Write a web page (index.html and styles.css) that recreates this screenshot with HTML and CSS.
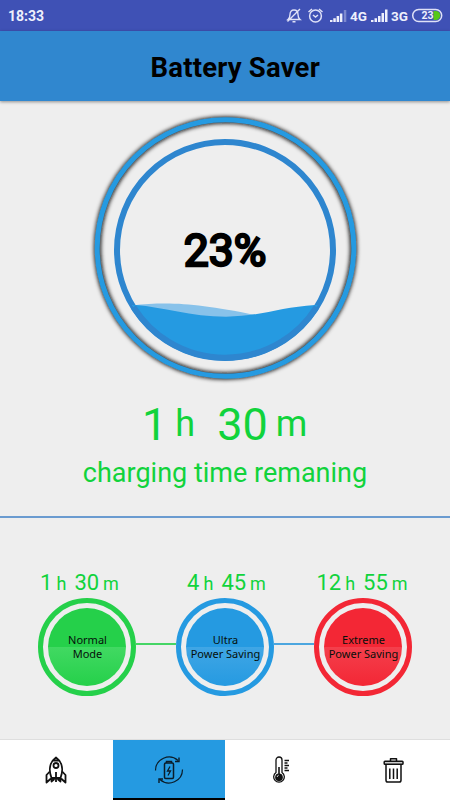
FILE: index.html
```html
<!DOCTYPE html>
<html lang="en">
<head>
<meta charset="utf-8" />
<title>Battery Saver</title>
<link rel="stylesheet" href="styles.css">
</head>
<body>
	<div class="status-bar">
		<span class="clock">18:33</span>
		<svg class="status-icons" width="160" height="31" viewBox="0 0 160 31" aria-hidden="true">
			<!-- muted bell -->
			<g fill="none" stroke="#dfe1f7" stroke-width="1.4">
				<path d="M3 19.500c1.500-1.200 2-2.500 2-5 0-3 1.500-4.500 4-4.500s4 1.500 4 4.500c0 2.500.5 3.800 2 5zM7.500 21.800h3M2.500 21.500L15 9"/>
			</g>
			<!-- alarm -->
			<g fill="none" stroke="#dfe1f7" stroke-width="1.500">
				<circle cx="30.500" cy="16" r="5.900"/>
				<path d="M23.500 12l3.500-3M37.500 12l-3.500-3M28 15l2.500 2 2.500-2"/>
			</g>
			<!-- signal 4G -->
			<g fill="#eef0fc">
				<path d="M45 20h2.500v2H45zM48.300 18.300h2.500V22h-2.500zM51.600 16h2.500v6h-2.500zM54.900 13.500h2.500V22h-2.500z"/>
				<path d="M58.800 10h2.500v12h-2.500z" opacity=".35"/>
			</g>
			<!-- signal 3G -->
			<path fill="#eef0fc" d="M86 20h2.500v2H86zM89.500 18.300H92V22h-2.500zM93 16h2.500v6H93zM96.500 13H99v9h-2.500zM100 9.500h2.500V22H100z"/>
			<text class="net" x="65" y="21">4G</text>
			<text class="net" x="106" y="21">3G</text>
			<!-- battery -->
			<rect x="127.700" y="9.500" width="29" height="12" rx="6" fill="none" stroke="#dfe1f7" stroke-width="1.500"/>
			<path d="M148.500 11h2.200a4.500 4.500 0 0 1 0 9h-2.200z" fill="#55c818"/>
			<text class="level" x="136.500" y="19.300">23</text>
		</svg>
	</div>

	<header class="app-header">
		<h1>Battery Saver</h1>
	</header>

	<main>
		<svg class="gauge" width="286" height="286" viewBox="0 0 286 286">
			<defs>
				<filter id="glow" x="-10%" y="-10%" width="120%" height="120%">
					<feGaussianBlur stdDeviation="2"/>
				</filter>
				<clipPath id="bowl"><circle cx="143" cy="146" r="108"/></clipPath>
			</defs>
			<circle cx="143.500" cy="144" r="128" fill="none" stroke="#111" stroke-width="6.500" filter="url(#glow)"/>
			<circle cx="143.500" cy="144" r="128.300" fill="none" stroke="#259ae1" stroke-width="5"/>
			<circle cx="143" cy="146" r="108" fill="none" stroke="#2e86cf" stroke-width="6"/>
			<g clip-path="url(#bowl)">
				<path d="M50 201.500C88 197.500 115 199.500 173 211V216H50z" fill="#88c2ea"/>
				<path d="M34 201H54C80 203 109 212.700 144 212.700C178 212.500 199 203 233 201H252V254H34z" fill="#259ae1"/>
			</g>
			<path d="M51.500 203A108 108 0 0 0 234.500 203" fill="none" stroke="#2e86cf" stroke-width="6"/>
			<text class="percent" x="143" y="161.500" text-anchor="middle">23%</text>
		</svg>

		<p class="remaining">
			<span class="num">1</span><span class="unit">h</span><span class="num">30</span><span class="unit">m</span>
		</p>
		<p class="caption">charging time remaning</p>

		<section class="modes">
			<div class="times">
				<p class="time"><b>1</b><i>h</i><b>30</b><i>m</i></p>
				<p class="time"><b>4</b><i>h</i><b>45</b><i>m</i></p>
				<p class="time"><b>12</b><i>h</i><b>55</b><i>m</i></p>
			</div>
			<div class="circles">
				<div class="mode normal"><span>Normal<br>Mode</span></div>
				<div class="link link-green"></div>
				<div class="mode ultra"><span>Ultra<br>Power Saving</span></div>
				<div class="link link-blue"></div>
				<div class="mode extreme"><span>Extreme<br>Power Saving</span></div>
			</div>
		</section>
	</main>

	<nav class="tabs">
		<a class="tab">
			<!-- rocket -->
			<svg width="30" height="30" viewBox="0 0 30 30" fill="none" stroke="#111" stroke-width="1.800" stroke-linejoin="round">
				<path d="M10.500 23C7.500 15 8.500 7 15 2.500 21.500 7 22.500 15 19.500 23zM11.500 5.500h7"/>
				<circle cx="15" cy="10.500" r="2.500"/>
				<path d="M8.800 16.500L5.500 20v7.500l4.500-4M21.200 16.500l3.300 3.500v7.500l-4.500-4M11 23l-.5 3.500 3-2.500M19 23l.5 3.500-3-2.500M15 17v10"/>
			</svg>
		</a>
		<a class="tab active">
			<!-- battery inside rotating arrows -->
			<svg width="30" height="30" viewBox="0 0 30 30" fill="none" stroke="#0b1c28" stroke-width="1.200">
				<path d="M1.500 15.500A13.500 13.500 0 0 1 24 5.500M28.500 14.500A13.500 13.500 0 0 1 6 24.500"/>
				<path d="M25 2.500v4h-4M5 28v-4h4" stroke-width="1.400"/>
				<rect x="10.500" y="8" width="9" height="15.500" rx="1.200" stroke-width="1.500"/>
				<path d="M12.500 8V6.500h5V8" stroke-width="1.500"/>
				<path d="M16 11.500l-2.500 4.500h3L14 20.500" stroke-width="1.300"/>
			</svg>
		</a>
		<a class="tab">
			<!-- thermometer -->
			<svg width="30" height="30" viewBox="0 0 30 30" fill="none" stroke="#111" stroke-width="1.300">
				<path d="M10 17.500V5a3 3 0 0 1 6 0v12.500a5.300 5.300 0 1 1-6 0z"/>
				<circle cx="13" cy="22.300" r="3.200" fill="#111"/>
				<path d="M13 12v9" stroke-width="1.600"/>
				<path d="M18.500 5.500h4.500M18.500 8h3M18.500 10.500h4.500M18.500 13h3M18.500 15.500h4.500"/>
				<path d="M11.200 22a2 2 0 0 1 1.500-1.800" stroke="#fff" stroke-width=".8"/>
			</svg>
		</a>
		<a class="tab">
			<!-- trash -->
			<svg width="30" height="30" viewBox="0 0 30 30" fill="none" stroke="#111" stroke-width="1.500" stroke-linejoin="round">
				<path d="M11.500 6V3.700h6V6"/>
				<rect x="5.200" y="6.200" width="18.800" height="3" rx=".8" fill="#ccc"/>
				<path d="M7 9.500v15.700q0 1.800 1.800 1.800h11.400q1.800 0 1.800-1.800V9.500"/>
				<path d="M10.800 13.500v10.500M14.500 13.500v10.500M18.200 13.500v10.500"/>
			</svg>
		</a>
	</nav>
</body>
</html>
```

FILE: styles.css
```css
* {
	box-sizing: border-box;
}

body {
	margin: 0;
	width: 450px;
	height: 800px;
	display: flex;
	flex-direction: column;
	overflow: hidden;
	background: #eee;
	font-family: Roboto, "Liberation Sans", sans-serif;
}

p,
h1 {
	margin: 0;
	font-weight: normal;
}

/* Status bar */
.status-bar {
	height: 31px;
	flex: none;
	display: flex;
	justify-content: space-between;
	align-items: center;
	padding: 0 5px 0 8px;
	background: #3f51b5;
}
.clock {
	color: #eef0fc;
	font-size: 14px;
	font-weight: 700;
	line-height: 31px;
	padding-top: 1px;
}
.net,
.level {
	fill: #eef0fc;
	font-size: 13.5px;
	font-weight: 700;
}
.level {
	font-size: 10.5px;
}

/* Header */
.app-header {
	height: 70px;
	flex: none;
	padding-left: 150.5px;
	background: #3087cf;
	box-shadow: 0 1px 3px rgba(0, 0, 0, .4);
}
.app-header h1 {
	font-size: 27.5px;
	font-weight: 700;
	letter-spacing: .2px;
	line-height: 74px;
	white-space: nowrap;
}

main {
	flex: 1;
	display: flex;
	flex-direction: column;
}

/* Charge gauge */
.gauge {
	flex: none;
	margin: 3px 0 0 82px;
}
.percent {
	font-size: 44.5px;
	fill: #000;
	stroke: #000;
	stroke-width: 2.4px;
}

.remaining,
.caption {
	color: #11d33c;
	text-align: center;
}
.remaining {
	display: flex;
	align-items: baseline;
	height: 61px;
	padding: 9px 0 0 142px;
	line-height: 52px;
}
.num {
	font-size: 45px;
}
.unit {
	font-size: 36px;
	line-height: 36px;
	margin: 0 22px 0 8px;
	transform: translateY(-4px);
}
.caption {
	font-size: 27px;
	line-height: 32px;
	height: 67px;
	padding-top: 6px;
	border-bottom: 2px solid #6a9bd0;
}

/* Saving modes */
.modes {
	padding-top: 51px;
	color: #11d33c;
}
.times {
	display: grid;
	grid-template-columns: 142px 152px 119px;
	padding-left: 8.5px;
	height: 29px;
}
.time {
	display: flex;
	justify-content: center;
	align-items: baseline;
	line-height: 28px;
}
.time b,
.time i {
	font-style: normal;
	font-weight: 400;
}
.time b {
	font-size: 22px;
}
.time i {
	font-size: 18px;
	margin: 0 8px 0 4px;
}
.time i:last-child {
	margin-right: 0;
}
.circles {
	display: flex;
	align-items: center;
	padding: 0 38px;
}
.mode {
	width: 98px;
	height: 98px;
	flex: none;
	padding: 5px;
	border: 5px solid;
	border-radius: 50%;
	background-clip: content-box;
}
.mode span {
	display: flex;
	align-items: center;
	justify-content: center;
	height: 78px;
	border-radius: 50%;
	padding-left: 1px;
	color: #06100a;
	font: 11px/14px "Noto Sans", "Open Sans", sans-serif;
	text-align: center;
	white-space: nowrap;
}
.normal {
	border-color: #25d04a;
}
.normal span {
	background: linear-gradient(#25d04a 50%, #41d962 50%, #25d04a);
}
.ultra {
	border-color: #259ae1;
}
.ultra span {
	background: linear-gradient(#259ae1 50%, #40a6e5 50%, #259ae1);
}
.extreme {
	border-color: #f32735;
}
.extreme span {
	background: linear-gradient(#f32735 50%, #f43f4c 50%, #f32735);
}
.link {
	flex: 1;
	height: 2px;
	margin-bottom: 7px;
}
.link-green {
	background: #45d565;
}
.link-blue {
	background: #4ca6df;
}

/* Bottom tabs */
.tabs {
	flex: none;
	display: grid;
	grid-template-columns: repeat(4, 1fr);
	height: 61px;
	border-top: 1px solid #dedede;
	background: #fff;
}
.tab {
	display: flex;
	align-items: center;
	justify-content: center;
}
.tab.active {
	background: #259ae1;
	border-bottom: 2px solid #000;
	padding-top: 2px;
}
```
